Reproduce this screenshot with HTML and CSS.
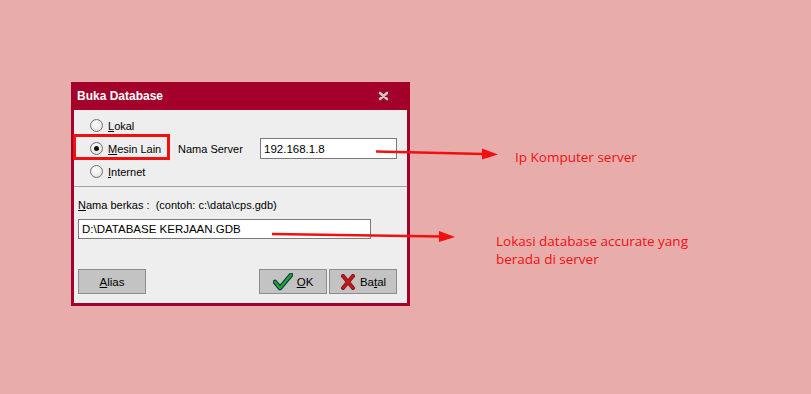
FILE: index.html
```html
<!DOCTYPE html>
<html lang="id">
<head>
    <meta charset="UTF-8">
    <title>Buka Database</title>
    <link rel="stylesheet" href="styles.css">
</head>
<body>

<div class="dialog">
    <div class="titlebar">
        <span class="title">Buka Database</span>
        <svg class="close" width="11" height="10" viewBox="0 0 11 10">
            <path d="M2 2 L9 8 M9 2 L2 8" stroke="#c9c9c9" stroke-width="2.6" stroke-linecap="round"/>
        </svg>
    </div>
    <div class="body">
        <div class="top">
            <div class="row">
                <label class="radio"><span class="dot"></span><span><u>L</u>okal</span></label>
            </div>
            <div class="row">
                <label class="radio"><span class="dot checked"></span><span><u>M</u>esin Lain</span></label>
                <span class="server-label">Nama Server</span>
                <div class="field server">192.168.1.8</div>
            </div>
            <div class="row">
                <label class="radio"><span class="dot"></span><span><u>I</u>nternet</span></label>
            </div>
        </div>
        <div class="bottom">
            <div class="file-label"><u>N</u>ama berkas :&nbsp; (contoh: c:\data\cps.gdb)</div>
            <div class="field file">D:\DATABASE KERJAAN.GDB</div>
            <div class="buttons">
                <button class="btn"><span><u>A</u>lias</span></button>
                <div class="spacer"></div>
                <button class="btn">
                    <svg width="20" height="18" viewBox="0 0 20 18">
                        <path d="M2 9 L7 15 L18 2" fill="none" stroke="#0c2d5a" stroke-width="4.6" stroke-linejoin="round" stroke-linecap="round"/>
                        <path d="M2 9 L7 15 L18 2" fill="none" stroke="#1fa81f" stroke-width="2.6" stroke-linejoin="round" stroke-linecap="round"/>
                    </svg>
                    <span><u>O</u>K</span>
                </button>
                <button class="btn">
                    <svg width="16" height="16" viewBox="0 0 16 16">
                        <path d="M3 2 L13 14 M13 2 L3 14" stroke="#8a0f12" stroke-width="4" stroke-linecap="round"/>
                        <path d="M3 2 L13 14 M13 2 L3 14" stroke="#c61b1f" stroke-width="2" stroke-linecap="round"/>
                    </svg>
                    <span>Ba<u>t</u>al</span>
                </button>
            </div>
        </div>
        <div class="highlight"></div>
    </div>
</div>

<svg class="arrows" width="811" height="394" viewBox="0 0 811 394">
    <path d="M376 151.5 L484 154" stroke="#f01010" stroke-width="2.4"/>
    <path d="M482 148.5 L498 154.5 L482 159.5 Z" fill="#f01010"/>
    <path d="M272 234 L441 236.5" stroke="#f01010" stroke-width="2.4"/>
    <path d="M439 231 L455 237 L439 242 Z" fill="#f01010"/>
</svg>

<div class="note note-ip">Ip Komputer server</div>
<div class="note note-db">Lokasi database accurate yang<br>berada di server</div>

</body>
</html>
```

FILE: styles.css
```css
body {
    margin: 0;
    width: 811px;
    height: 394px;
    background: #e8adab;
    font-family: "Liberation Sans", Arial, sans-serif;
    font-size: 11px;
    color: #000;
    overflow: hidden;
    position: relative;
}
.dialog {
    margin: 82px 0 0 71px;
    width: 333px;
    padding: 0 3px 3px;
    background: #a3002c;
}
.titlebar {
    height: 28px;
    display: flex;
    align-items: center;
    justify-content: space-between;
    padding: 0 18px 0 3px;
}
.title {
    color: #fff;
    font-weight: bold;
    font-size: 12px;
}
.body {
    background: #eeeeee;
    height: 193px;
    position: relative;
}
.top {
    padding: 4px 0 3px 16px;
    border-bottom: 1px solid #a0a0a0;
}
.row {
    height: 23px;
    display: flex;
    align-items: center;
}
.radio {
    display: flex;
    align-items: center;
    gap: 5px;
    width: 88px;
}
.dot {
    width: 11px;
    height: 11px;
    border: 1px solid #6e6e6e;
    border-radius: 50%;
    background: radial-gradient(circle at 40% 35%, #ffffff, #dcdcdc);
    position: relative;
}
.dot.checked::after {
    content: "";
    position: absolute;
    left: 3px;
    top: 3px;
    width: 5px;
    height: 5px;
    border-radius: 50%;
    background: #111;
}
.server-label {
    width: 82px;
}
.field {
    background: #fff;
    border: 1px solid #7a7a7a;
    box-sizing: border-box;
    padding: 0 3px;
    display: flex;
    align-items: center;
    font-size: 11.5px;
}
.server {
    width: 137px;
    height: 21px;
}
.bottom {
    padding: 10px 10px 0 4px;
}
.file-label {
    line-height: 16px;
}
.file {
    margin-top: 6px;
    width: 293px;
    height: 20px;
}
.buttons {
    display: flex;
    gap: 2px;
    margin-top: 30px;
}
.spacer {
    flex: 1;
}
.btn {
    width: 68px;
    height: 25px;
    background: #c3c3c3;
    border: 1px solid #8c8c8c;
    font-family: inherit;
    font-size: 11.5px;
    display: flex;
    align-items: center;
    justify-content: center;
    gap: 4px;
    padding: 0;
}
.highlight {
    position: absolute;
    left: -1px;
    top: 24px;
    width: 91px;
    height: 20px;
    border: 3px solid #f01010;
}
.arrows {
    position: absolute;
    left: 0;
    top: 0;
}
.note {
    position: absolute;
    color: #f01010;
    font-family: "Open Sans", sans-serif;
    font-size: 13.5px;
    line-height: 18px;
}
.note-ip {
    left: 515px;
    top: 148px;
}
.note-db {
    left: 496px;
    top: 232px;
}
```
